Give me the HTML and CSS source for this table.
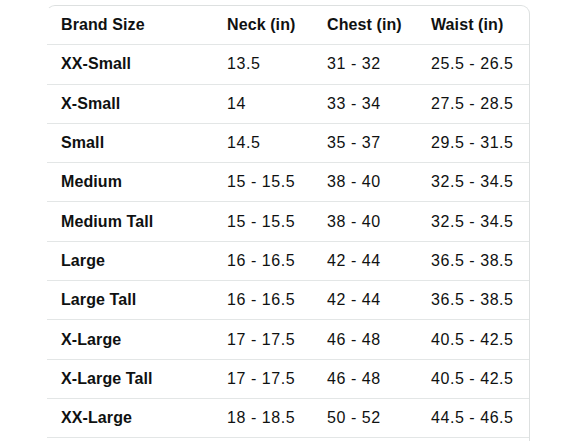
FILE: index.html
```html
<!DOCTYPE html>
<html>
<head>
<meta charset="utf-8">
<link rel="stylesheet" href="styles.css">
</head>
<body>
<div class="table">
  <div class="row head">
    <div class="cell b">Brand Size</div><div class="cell b">Neck (in)</div><div class="cell b">Chest (in)</div><div class="cell b">Waist (in)</div>
  </div>
  <div class="row"><div class="cell b">XX-Small</div><div class="cell">13.5</div><div class="cell">31 - 32</div><div class="cell">25.5 - 26.5</div></div>
  <div class="row"><div class="cell b">X-Small</div><div class="cell">14</div><div class="cell">33 - 34</div><div class="cell">27.5 - 28.5</div></div>
  <div class="row"><div class="cell b">Small</div><div class="cell">14.5</div><div class="cell">35 - 37</div><div class="cell">29.5 - 31.5</div></div>
  <div class="row"><div class="cell b">Medium</div><div class="cell">15 - 15.5</div><div class="cell">38 - 40</div><div class="cell">32.5 - 34.5</div></div>
  <div class="row"><div class="cell b">Medium Tall</div><div class="cell">15 - 15.5</div><div class="cell">38 - 40</div><div class="cell">32.5 - 34.5</div></div>
  <div class="row"><div class="cell b">Large</div><div class="cell">16 - 16.5</div><div class="cell">42 - 44</div><div class="cell">36.5 - 38.5</div></div>
  <div class="row"><div class="cell b">Large Tall</div><div class="cell">16 - 16.5</div><div class="cell">42 - 44</div><div class="cell">36.5 - 38.5</div></div>
  <div class="row"><div class="cell b">X-Large</div><div class="cell">17 - 17.5</div><div class="cell">46 - 48</div><div class="cell">40.5 - 42.5</div></div>
  <div class="row"><div class="cell b">X-Large Tall</div><div class="cell">17 - 17.5</div><div class="cell">46 - 48</div><div class="cell">40.5 - 42.5</div></div>
  <div class="row"><div class="cell b">XX-Large</div><div class="cell">18 - 18.5</div><div class="cell">50 - 52</div><div class="cell">44.5 - 46.5</div></div>
  <div class="row"></div>
</div>
</body>
</html>
```
FILE: styles.css
```css
html, body {
  margin: 0;
  padding: 0;
  background: #ffffff;
  overflow: hidden;
  height: 441px;
}
body {
  font-family: "Liberation Sans", Arial, sans-serif;
  color: #0f1111;
}
.table {
  margin: 5px 0 0 46px;
  width: 482px;
  border: 1px solid #dde0e0;
  border-left-color: transparent;
  border-radius: 9px;
}
.row {
  display: grid;
  grid-template-columns: 166px 100px 104px 110px;
  height: 38.3px;
  align-items: center;
  border-top: 1px solid #e3e6e6;
}
.row.head {
  border-top: 0;
}
.cell {
  padding-left: 14px;
  font-size: 16px;
  letter-spacing: 0.55px;
  white-space: nowrap;
}
.cell.b {
  font-weight: bold;
  letter-spacing: 0.1px;
}
```
